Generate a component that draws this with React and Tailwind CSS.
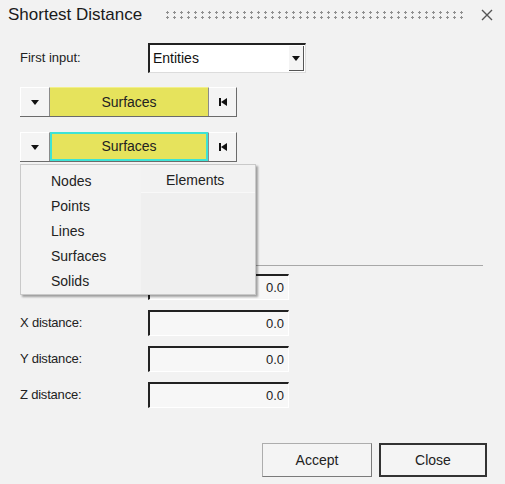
import React from 'react'

function Arrow() {
  return (
    <svg width="8" height="5" viewBox="0 0 8 5"><polygon points="0,0 8,0 4,5" fill="#111" /></svg>
  )
}

function First() {
  return (
    <svg width="8" height="8" viewBox="0 0 8 8">
      <rect x="0" y="0" width="2" height="8" fill="#111" />
      <polygon points="8,0 8,8 2,4" fill="#111" />
    </svg>
  )
}

function Selector({ active }) {
  return (
    <div className="flex h-[30px] w-[217px] border-b border-b-[#6b6b6b]">
      <div className="w-[30px] flex items-center justify-center bg-[#f4f4f4] border-t border-l border-r border-t-white border-l-white border-r-[#8a8a8a]">
        <Arrow />
      </div>
      <div className={'flex-1 flex items-center justify-center bg-[#e6e35c] text-[14px] text-[#222] ' + (active ? 'border-2 border-[#3ee3d6]' : 'border-t border-t-[#f2f08a]')}>
        Surfaces
      </div>
      <div className="w-[29px] flex items-center justify-center bg-[#f4f4f4] border-t border-l border-r border-t-white border-l-[#8a8a8a] border-r-[#6b6b6b]">
        <First />
      </div>
    </div>
  )
}

function Field({ label }) {
  return (
    <div className="flex items-center h-[26px]">
      <div className="w-[128px] text-[13px] text-[#222] tracking-[-0.2px]">{label}</div>
      <div className="w-[141px] h-[26px] flex items-center justify-end pr-[4px] bg-[#f7f7f7] border-t-2 border-l-2 border-t-[#222] border-l-[#222] border-b border-r border-b-white border-r-white text-[13px] text-[#222]">
        0.0
      </div>
    </div>
  )
}

export default function App() {
  const left = ['Nodes', 'Points', 'Lines', 'Surfaces', 'Solids']
  return (
    <div className="w-[505px] h-[484px] bg-[#f2f2f2] flex flex-col font-['Liberation_Sans',Arial,sans-serif] overflow-hidden">
      <div className="h-[30px] flex items-center pl-[8px] pr-[12px]">
        <div className="text-[17px] text-[#1a1a1a]">Shortest Distance</div>
        <div className="flex-1 ml-[22px] mr-[14px] h-[10px] bg-[radial-gradient(circle,#8f8f8f_1px,transparent_1.3px)] bg-[length:7px_5px]" />
        <svg width="12" height="12" viewBox="0 0 12 12"><path d="M1 1 L11 11 M11 1 L1 11" stroke="#555" strokeWidth="1.4" /></svg>
      </div>

      <div className="px-[20px] flex flex-col">
        <div className="flex items-center mt-[13px]">
          <div className="w-[128px] text-[13px] text-[#222]">First input:</div>
          <div className="w-[158px] h-[30px] flex bg-white border-t-2 border-l-2 border-t-[#222] border-l-[#222] border-b border-r border-b-[#dcdcdc] border-r-[#dcdcdc]">
            <div className="flex-1 flex items-center pl-[3px] text-[14px] text-[#111]">Entities</div>
            <div className="w-[15px] my-[1px] mr-[1px] flex items-center justify-center bg-[#f4f4f4] border-b border-r border-b-[#555] border-r-[#555]">
              <Arrow />
            </div>
          </div>
        </div>

        <div className="mt-[14px]"><Selector /></div>

        <div className="mt-[15px] relative">
          <Selector active />
          <div className="absolute left-0 top-[32px] w-[236px] h-[131px] flex bg-[#f3f3f3] border border-[#c9c9c9] shadow-[2px_2px_2px_rgba(0,0,0,0.35)] z-10">
            <div className="w-[120px] flex flex-col pl-[30px] pt-[4px]">
              {left.map(t => (
                <div key={t} className="h-[25px] flex items-center text-[14px] text-[#222]">{t}</div>
              ))}
            </div>
            <div className="flex-1 bg-[#efefef] flex flex-col">
              <div className="h-[28px] pt-[4px] flex items-center pl-[25px] bg-[#f2f2f2] border-b border-b-[#f8f8f8] text-[14px] text-[#222]">Elements</div>
            </div>
          </div>
        </div>

        <div className="mt-[103px] h-px bg-[#a8a8a8] w-[463px]" />

        <div className="mt-[8px] flex flex-col gap-[10px]">
          <Field label="" />
          <Field label="X distance:" />
          <Field label="Y distance:" />
          <Field label="Z distance:" />
        </div>
      </div>

      <div className="mt-auto mb-[7px] flex justify-end gap-[7px] pr-[18px]">
        <button className="w-[110px] h-[34px] bg-[#f4f4f4] border border-[#adadad] border-b-[#7a7a7a] border-r-[#7a7a7a] text-[14px] text-[#222]">Accept</button>
        <button className="w-[108px] h-[34px] bg-[#f4f4f4] border-2 border-[#333] text-[14px] text-[#222]">Close</button>
      </div>
    </div>
  )
}
